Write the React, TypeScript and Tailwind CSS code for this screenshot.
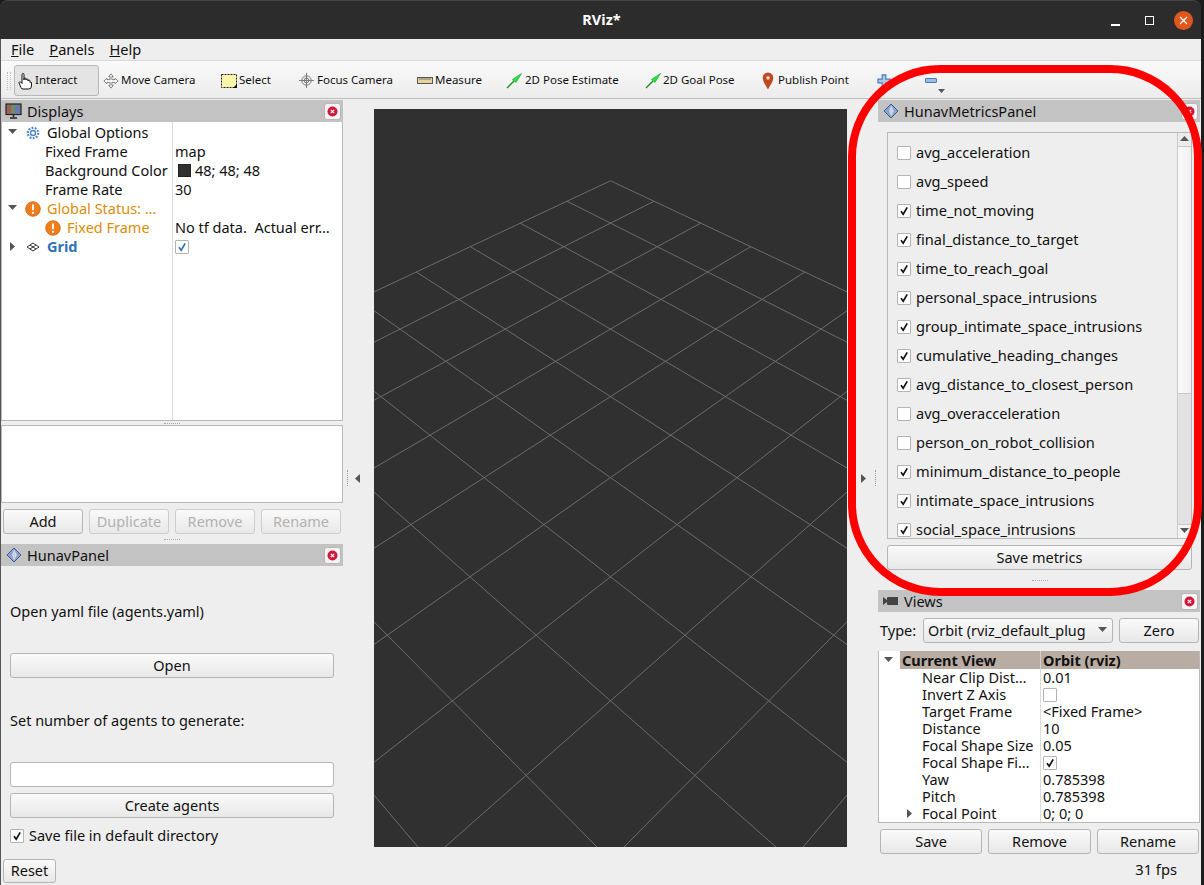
import React from "react";

const FONT = "font-['Noto_Sans','Open_Sans',sans-serif] [font-variant-ligatures:none]";

function GridLines() {
  const W = 473, H = 738;
  const pt = (p: number, q: number) => {
    const w = 0.0016926 - 0.0000566 * (p + q);
    return [610.5 - 374 + (0.0712 * (p - q)) / w, -410 - 109 + 1 / w];
  };
  const lines: React.ReactNode[] = [];
  for (let i = 0; i <= 10; i++) {
    const [a, b] = pt(i, 0), [c, d] = pt(i, 10), [e, f] = pt(0, i), [g, h] = pt(10, i);
    lines.push(<line key={"a" + i} x1={a} y1={b} x2={c} y2={d} />);
    lines.push(<line key={"b" + i} x1={e} y1={f} x2={g} y2={h} />);
  }
  return (
    <svg width={W} height={H} viewBox={`0 0 ${W} ${H}`} className="block" stroke="#6c6c6c" strokeWidth="1" fill="none">
      {lines}
    </svg>
  );
}

function CloseBtn() {
  return (
    <div className="w-[17px] h-[17px] rounded-[3px] bg-[#f4f4f4] border border-[#b8b8b8] flex items-center justify-center">
      <svg width="11" height="11" viewBox="0 0 11 11">
        <circle cx="5.5" cy="5.5" r="5" fill="#d0183a" />
        <path d="M3.8 3.8l3.4 3.4M7.2 3.8l-3.4 3.4" stroke="#fff" strokeWidth="1.2" />
      </svg>
    </div>
  );
}

function Diamond() {
  return (
    <svg width="16" height="16" viewBox="0 0 16 16">
      <path d="M8 1l7 7-7 7-7-7z" fill="#8ea3c9" stroke="#3c5a94" strokeWidth="1" />
      <path d="M8 2.500l3 5.500-3 5.500-2-5.500z" fill="#c9d5ea" />
    </svg>
  );
}

function PanelHead({ icon, title, w }: { icon: React.ReactNode; title: string; w?: string }) {
  return (
    <div className={`h-[22px] shrink-0 bg-[#c3c3c3] flex items-center justify-between pl-[4px] pr-[2px] ${w ?? ""}`}>
      <div className="flex items-center gap-[5px] text-[14.5px] text-[#111]">
        <div className="w-[17px] flex items-center justify-center">{icon}</div>
        <span className="pt-[2px]">{title}</span>
      </div>
      <CloseBtn />
    </div>
  );
}

function Btn({ children, disabled, className }: { children: React.ReactNode; disabled?: boolean; className?: string }) {
  return (
    <div
      className={`flex items-center justify-center rounded-[3px] border bg-gradient-to-b from-[#fafafa] to-[#e8e8e8] text-[14.5px] ${
        disabled ? "text-[#b2b2b2] border-[#cdcdcd]" : "text-[#111] border-[#b5b5b5]"
      } ${className ?? ""}`}
    >
      {children}
    </div>
  );
}

function Check({ on, blue }: { on?: boolean; blue?: boolean }) {
  return (
    <div className="w-[14px] h-[14px] shrink-0 rounded-[1px] border border-[#b4b4b4] bg-white flex items-center justify-center">
      {on && (
        <svg width="10" height="10" viewBox="0 0 10 10">
          <path d="M2 5.2l2.2 3L8.2 1.4" fill="none" stroke={blue ? "#2f72b8" : "#111"} strokeWidth="1.7" />
        </svg>
      )}
    </div>
  );
}

function Arrow({ dir }: { dir: "down" | "right" | "left" | "up" }) {
  const d = { down: "M0 1h9L4.5 6z", right: "M2 0v9l5-4.500z", left: "M7 0v9L2 4.500z", up: "M0 6h9L4.500 1z" }[dir];
  return (
    <svg width="9" height="9" viewBox="0 0 9 9" className="shrink-0">
      <path d={d} fill="#555" />
    </svg>
  );
}

function Warn({ size = 17 }: { size?: number }) {
  return (
    <svg width={size} height={size} viewBox="0 0 17 17" className="shrink-0">
      <circle cx="8.500" cy="8.500" r="7.800" fill="#ee7d1c" stroke="#c9640f" strokeWidth="0.8" />
      <rect x="7.500" y="3.500" width="2" height="6.500" rx="1" fill="#fff" />
      <circle cx="8.500" cy="12.500" r="1.200" fill="#fff" />
    </svg>
  );
}

function TreeRow({ indent, arrow, icon, label, labelClass, value, h = "h-[19px]" }: {
  indent: string; arrow?: React.ReactNode; icon?: React.ReactNode; label: string; labelClass?: string; value?: React.ReactNode; h?: string;
}) {
  return (
    <div className={`flex ${h} items-center leading-[19px]`}>
      <div className={`w-[170px] shrink-0 flex items-center overflow-hidden whitespace-nowrap ${indent}`}>
        {arrow}
        {icon}
        <span className={labelClass ?? ""}>{label}</span>
      </div>
      <div className="pl-[3px] whitespace-pre overflow-hidden flex items-center flex-1 min-w-0">{value}</div>
    </div>
  );
}

function ToolItem({ icon, label, className, lc }: { icon: React.ReactNode; label: string; className?: string; lc?: string }) {
  return (
    <div className={`flex items-center shrink-0 text-[11.5px] text-[#111] whitespace-nowrap ${className ?? ""}`}>
      <div className="w-[18px] h-[18px] shrink-0 flex items-center">{icon}</div>
      <span className={`-mt-[2px] ${lc ?? ""}`}>{label}</span>
    </div>
  );
}

const metrics: [string, boolean][] = [
  ["avg_acceleration", false],
  ["avg_speed", false],
  ["time_not_moving", true],
  ["final_distance_to_target", true],
  ["time_to_reach_goal", true],
  ["personal_space_intrusions", true],
  ["group_intimate_space_intrusions", true],
  ["cumulative_heading_changes", true],
  ["avg_distance_to_closest_person", true],
  ["avg_overacceleration", false],
  ["person_on_robot_collision", false],
  ["minimum_distance_to_people", true],
  ["intimate_space_intrusions", true],
  ["social_space_intrusions", true],
];

const Green = () => (
  <svg width="17" height="17" viewBox="0 0 17 17" className="shrink-0">
    <path d="M1 16L8 9" stroke="#1f8f2a" strokeWidth="1.400" />
    <path d="M6.500 7.500L15.500 1.500 10 10.500z" fill="#24e83c" stroke="#179a28" strokeWidth="0.600" />
  </svg>
);

const Cross = () => (
  <svg width="16" height="16" viewBox="0 0 18 18" className="shrink-0" fill="#fff" stroke="#666" strokeWidth="0.900">
    <path d="M9 1l2.500 3H10v3.500h3.500V6L17 9l-3.500 3v-1.500H10V14h1.500L9 17l-2.500-3H8v-3.500H4.500V12L1 9l3.500-3v1.500H8V4H6.500z" />
  </svg>
);

export default function App() {
  return (
    <div className={`relative w-[1204px] h-[885px] overflow-hidden bg-[#1c1c1c] ${FONT}`}>
      <div className="w-[1201px] h-[39px] bg-[#2c2c2c] rounded-t-[8px] relative flex items-center justify-center text-white font-bold text-[14.5px] border-t border-[#444]">
        <span className="translate-x-[1px]">RViz*</span>
        <div className="absolute right-[8px] top-[10px] flex items-center">
          <div className="w-[11px] h-[11px] flex items-end mr-[23px]"><div className="w-[9px] h-[2px] bg-white" /></div>
          <div className="w-[9px] h-[9px] border border-white mr-[20px]" />
          <div className="w-[19px] h-[19px] rounded-full bg-[#e0561f] flex items-center justify-center">
            <svg width="9" height="9" viewBox="0 0 9 9"><path d="M1 1l7 7M8 1l-7 7" stroke="#fff" strokeWidth="1.200" /></svg>
          </div>
        </div>
      </div>
      <div className="w-[1201px] bg-[#eeeeee] h-[846px] flex flex-col text-[14.5px] text-[#111] border-l border-[#555]">
        {/* menu */}
        <div className="h-[21px] flex items-center pl-[10px] gap-[15px] text-[14.6px] border-b border-[#d8d8d8] shrink-0 box-content">
          <span><u>F</u>ile</span>
          <span><u>P</u>anels</span>
          <span><u>H</u>elp</span>
        </div>
        {/* toolbar */}
        <div className="h-[38px] shrink-0 flex items-center bg-gradient-to-b from-[#fafafa] to-[#ececec] border-b border-[#bdbdbd] pl-[6px] pt-[2px]">
          <div className="w-[4px] h-[18px] mr-[3px] border-l border-r border-dotted border-[#bdbdbd]" />
          <div className="w-[85px] h-[31px] shrink-0 rounded-[3px] border border-[#b8b8b8] bg-[#e4e4e4] flex items-center pl-[2px] gap-[1px] text-[11.5px] mr-[4px]">
            <svg width="17" height="18" viewBox="0 0 17 18" className="shrink-0">
              <path d="M5 10V2.500a1 1 0 012 0V8 7a1 1 0 012 0v1a1 1 0 012 0v1a1 1 0 012 0v1.500a1 1 0 011.500 0V14a3 3 0 01-3 3H6a2 2 0 01-2-1.500L2 11a1 1 0 011.600-1L5 11.500z" fill="#fff" stroke="#111" strokeWidth="1" />
            </svg>
            <span className="-mt-[2px]">Interact</span>
          </div>
          <ToolItem className="w-[118px]" icon={<Cross />} label="Move Camera" />
          <ToolItem className="w-[77px]" icon={
            <svg width="16" height="14" viewBox="0 0 16 14" className="shrink-0">
              <rect x="0.500" y="0.500" width="15" height="13" fill="#fbf6a8" stroke="#222" strokeDasharray="2 1" />
              <path d="M12 14l4-4v4z" fill="#111" />
            </svg>
          } label="Select" />
          <ToolItem className="w-[119px]" lc="ml-[1px]" icon={
            <svg width="17" height="17" viewBox="0 0 18 18" className="shrink-0" fill="none" stroke="#777">
              <circle cx="9" cy="9" r="5" fill="#eee" />
              <path d="M9 1v16M1 9h16" />
              <circle cx="9" cy="9" r="2.500" />
            </svg>
          } label="Focus Camera" />
          <ToolItem className="w-[89px]" icon={
            <svg width="16" height="7" viewBox="0 0 16 7" className="shrink-0">
              <rect x="0.500" y="0.500" width="15" height="6" fill="#e6d59a" stroke="#555" />
              <path d="M3 1v2M5 1v2M7 1v2M9 1v2M11 1v2M13 1v2" stroke="#777" />
            </svg>
          } label="Measure" />
          <ToolItem className="w-[139px]" lc="ml-[1px]" icon={<Green />} label="2D Pose Estimate" />
          <ToolItem className="w-[117px]" icon={<Green />} label="2D Goal Pose" />
          <ToolItem className="w-[115px]" lc="-ml-[2px]" icon={
            <svg width="12" height="18" viewBox="0 0 11 17" className="shrink-0">
              <path d="M5.500 16.500C3 12 .5 9 .5 5.500a5 5 0 0110 0C10.500 9 8 12 5.500 16.500z" fill="#bc4a22" />
              <circle cx="5.500" cy="5.500" r="1.800" fill="#f2d0c0" />
            </svg>
          } label="Publish Point" />
          <div className="w-[48px] shrink-0">
            <svg width="14" height="14" viewBox="0 0 15 15">
              <path d="M5.500 1h4v4.500H14v4H9.500V14h-4V9.500H1v-4h4.500z" fill="#aac6e8" stroke="#4b79b5" strokeWidth="1.200" />
            </svg>
          </div>
          <div className="relative w-[20px] h-[20px] shrink-0">
            <div className="w-[12px] h-[5px] mt-[7px] bg-[#9cbde4] border border-[#4b79b5] rounded-[1px]" />
            <svg width="7" height="4" viewBox="0 0 7 4" className="absolute left-[13px] -bottom-[2px]"><path d="M0 0h7L3.500 4z" fill="#555" /></svg>
          </div>
        </div>
        {/* body */}
        <div className="flex-1 min-h-0 flex">
          {/* left column */}
          <div className="w-[342px] shrink-0 flex flex-col pt-[1px]">
            <PanelHead title="Displays" icon={
              <svg width="17" height="16" viewBox="0 0 17 16">
                <rect x="1" y="1" width="15" height="10.500" fill="#6d8f5f" stroke="#222" strokeWidth="1.200" />
                <rect x="2" y="2" width="4" height="9" fill="#a85a5a" />
                <rect x="10" y="2" width="5" height="9" fill="#6a78b0" />
                <path d="M8.500 12v2M5 15h7" stroke="#222" strokeWidth="1.600" />
              </svg>
            } />
            <div className="h-[299px] shrink-0 bg-white border border-[#b9b9b9] border-t-0 relative flex flex-col pt-[1px] text-[14.5px]">
              <div className="absolute left-[170px] top-0 bottom-0 w-px bg-[#dcdcdc]" />
              <TreeRow indent="pl-[6px]" arrow={<Arrow dir="down" />} icon={
                <svg width="14" height="14" viewBox="0 0 14 14" className="ml-[9px] mr-[7px] shrink-0" fill="none" stroke="#4c84c8">
                  <circle cx="7" cy="7" r="2.500" strokeWidth="1.400" />
                  <circle cx="7" cy="7" r="5.200" strokeWidth="2.200" strokeDasharray="1.800 1.400" />
                </svg>
              } label="Global Options" />
              <TreeRow indent="pl-[43px]" label="Fixed Frame" value="map" />
              <TreeRow indent="pl-[43px]" label="Background Color" value={<><div className="w-[13px] h-[13px] bg-[#303030] border border-[#222] ml-[3px] mr-[4px]" />48; 48; 48</>} />
              <TreeRow indent="pl-[43px]" label="Frame Rate" value="30" />
              <TreeRow indent="pl-[6px]" arrow={<Arrow dir="down" />} icon={<span className="ml-[8px] mr-[6px] flex"><Warn size={16} /></span>} label="Global Status: …" labelClass="text-[#d98e0a]" />
              <TreeRow indent="pl-[43px]" icon={<span className="mr-[6px] flex"><Warn size={16} /></span>} label="Fixed Frame" labelClass="text-[#d98e0a]" value="No tf data.  Actual err…" />
              <TreeRow indent="pl-[6px]" arrow={<Arrow dir="right" />} icon={
                <svg width="14" height="10" viewBox="0 0 14 10" className="ml-[9px] mr-[7px] shrink-0" fill="none" stroke="#333">
                  <path d="M7 1l6 4-6 4-6-4zM4 3l6 4M10 3L4 7" />
                </svg>
              } label="Grid" labelClass="text-[#2f72b8] font-bold" value={<Check on blue />} />
            </div>
            <div className="h-[4px] shrink-0 flex items-center justify-center"><div className="w-[16px] border-t border-dotted border-[#aaa]" /></div>
            <div className="h-[78px] shrink-0 bg-white border border-[#b9b9b9]" />
            <div className="flex gap-[6px] pl-[2px] pr-[2px] mt-[6px] shrink-0">
              <Btn className="w-[80px] h-[25px]">Add</Btn>
              <Btn disabled className="w-[80px] h-[25px]">Duplicate</Btn>
              <Btn disabled className="w-[80px] h-[25px]">Remove</Btn>
              <Btn disabled className="w-[80px] h-[25px]">Rename</Btn>
            </div>
            <div className="h-[10px] shrink-0 flex items-center justify-center"><div className="w-[16px] border-t border-dotted border-[#aaa]" /></div>
            <PanelHead title="HunavPanel" icon={<Diamond />} />
            <div className="flex-1 min-h-0 px-[9px] flex flex-col text-[14.5px]">
              <div className="mt-[36px] h-[20px] flex items-center">Open yaml file (agents.yaml)</div>
              <Btn className="mt-[31px] h-[25px]">Open</Btn>
              <div className="mt-[33px] h-[20px] flex items-center">Set number of agents to generate:</div>
              <div className="mt-[31px] h-[25px] rounded-[3px] border border-[#b5b5b5] bg-white" />
              <Btn className="mt-[6px] h-[25px]">Create agents</Btn>
              <div className="mt-[9px] h-[17px] flex items-center gap-[5px]"><Check on /><span>Save file in default directory</span></div>
            </div>
            <div className="pl-[2px] pb-[2px] shrink-0">
              <Btn className="w-[53px] h-[24px] rounded-[2px]">Reset</Btn>
            </div>
          </div>
          {/* center */}
          <div className="w-[535px] shrink-0 flex pt-[10px]">
            <div className="w-[31px] shrink-0 flex items-center justify-end pr-[12px] gap-[5px] h-[738px]">
              <div className="h-[16px] border-l border-dotted border-[#999]" />
              <Arrow dir="left" />
            </div>
            <div className="w-[473px] h-[738px] shrink-0 bg-[#303030] overflow-hidden"><GridLines /></div>
            <div className="w-[31px] shrink-0 flex items-center pl-[12px] gap-[7px] h-[738px]">
              <Arrow dir="right" />
              <div className="h-[16px] border-l border-dotted border-[#999]" />
            </div>
          </div>
          {/* right column */}
          <div className="flex-1 min-w-0 flex flex-col pt-[1px]">
            <PanelHead title="HunavMetricsPanel" icon={<Diamond />} w="mr-[1px]" />
            <div className="pl-[9px] pr-[9px] pt-[10px] flex flex-col shrink-0">
              <div className="h-[407px] border border-[#b9b9b9] flex overflow-hidden">
                <div className="flex-1 min-w-0 pl-[9px] overflow-hidden">
                  {metrics.map(([m, on], i) => (
                    <div key={m} className={`h-[29px] flex items-center gap-[5px] text-[14.6px] ${i === 0 ? "mt-[5px]" : ""}`}>
                      <Check on={on} /><span>{m}</span>
                    </div>
                  ))}
                </div>
                <div className="w-[14px] shrink-0 border-l border-[#c8c8c8] bg-[#ececec] flex flex-col">
                  <div className="h-[14px] shrink-0 flex items-center justify-center border-b border-[#c8c8c8]"><Arrow dir="up" /></div>
                  <div className="h-[247px] shrink-0 bg-gradient-to-r from-[#fafafa] to-[#f0f0f0] border-b border-[#c8c8c8]" />
                  <div className="flex-1 bg-[#e2e2e2]" />
                  <div className="h-[14px] shrink-0 flex items-center justify-center bg-[#f4f4f4] border-t border-[#c8c8c8]"><Arrow dir="down" /></div>
                </div>
              </div>
              <Btn className="mt-[6px] h-[25px]">Save metrics</Btn>
            </div>
            <div className="h-[20px] shrink-0 flex items-center justify-center"><div className="w-[16px] border-t border-dotted border-[#aaa]" /></div>
            <PanelHead title="Views" w="mr-[1px]" icon={
              <svg width="16" height="10" viewBox="0 0 16 10"><path d="M0 1l4 3V2a1 1 0 011-1h10v8H5a1 1 0 01-1-1V6l-4 3z" fill="#444" /></svg>
            } />
            <div className="flex items-center mt-[6px] pl-[2px] shrink-0 text-[14.5px]">
              <span className="w-[43px]">Type:</span>
              <div className="w-[190px] h-[25px] rounded-[3px] border border-[#b5b5b5] bg-gradient-to-b from-[#fafafa] to-[#e8e8e8] flex items-center justify-between pl-[4px] pr-[5px] whitespace-nowrap overflow-hidden text-[14.4px]">
                <span>Orbit (rviz_default_plug</span><Arrow dir="down" />
              </div>
              <Btn className="ml-[6px] w-[80px] h-[25px]">Zero</Btn>
            </div>
            <div className="mt-[8px] h-[172px] mr-[1px] bg-white border border-[#b9b9b9] border-t-0 relative text-[14.5px] leading-[17px] flex flex-col shrink-0">
              <div className="flex h-[18px] bg-white font-bold shrink-0">
                <div className="w-[21px] flex items-center pl-[5px]"><Arrow dir="down" /></div>
                <div className="w-[140px] bg-[#b9aca3] pl-[2px] flex items-center">Current View</div>
                <div className="flex-1 bg-[#b9aca3] pl-[2px] flex items-center border-l border-[#d8d0ca]">Orbit (rviz)</div>
              </div>
              <div className="absolute left-[161px] top-[18px] bottom-0 w-px bg-[#dcdcdc]" />
              {([
                ["Near Clip Dist…", "0.01"],
                ["Invert Z Axis", <Check key="a" />],
                ["Target Frame", "<Fixed Frame>"],
                ["Distance", "10"],
                ["Focal Shape Size", "0.05"],
                ["Focal Shape Fi…", <Check key="b" on />],
                ["Yaw", "0.785398"],
                ["Pitch", "0.785398"],
                ["Focal Point", "0; 0; 0"],
              ] as [string, React.ReactNode][]).map(([a, b], i) => (
                <div key={a} className="flex h-[17px] items-center shrink-0">
                  <div className="w-[161px] shrink-0 pl-[43px] flex items-center relative whitespace-nowrap">
                    {i === 8 && <span className="absolute left-[26px] top-[4px] flex"><Arrow dir="right" /></span>}
                    {a}
                  </div>
                  <div className="pl-[3px] flex items-center">{b}</div>
                </div>
              ))}
            </div>
            <div className="flex gap-[6px] mt-[6px] pl-[2px] shrink-0">
              <Btn className="w-[102px] h-[25px]">Save</Btn>
              <Btn className="w-[103px] h-[25px]">Remove</Btn>
              <Btn className="w-[102px] h-[25px]">Rename</Btn>
            </div>
            <div className="mt-[4px] pr-[24px] text-right text-[14.7px]">31 fps</div>
          </div>
        </div>
      </div>
      <div className="absolute left-[848px] top-[65px] w-[354px] h-[531px] border-[8px] border-[#ff0000] rounded-[92px] pointer-events-none" />
    </div>
  );
}
